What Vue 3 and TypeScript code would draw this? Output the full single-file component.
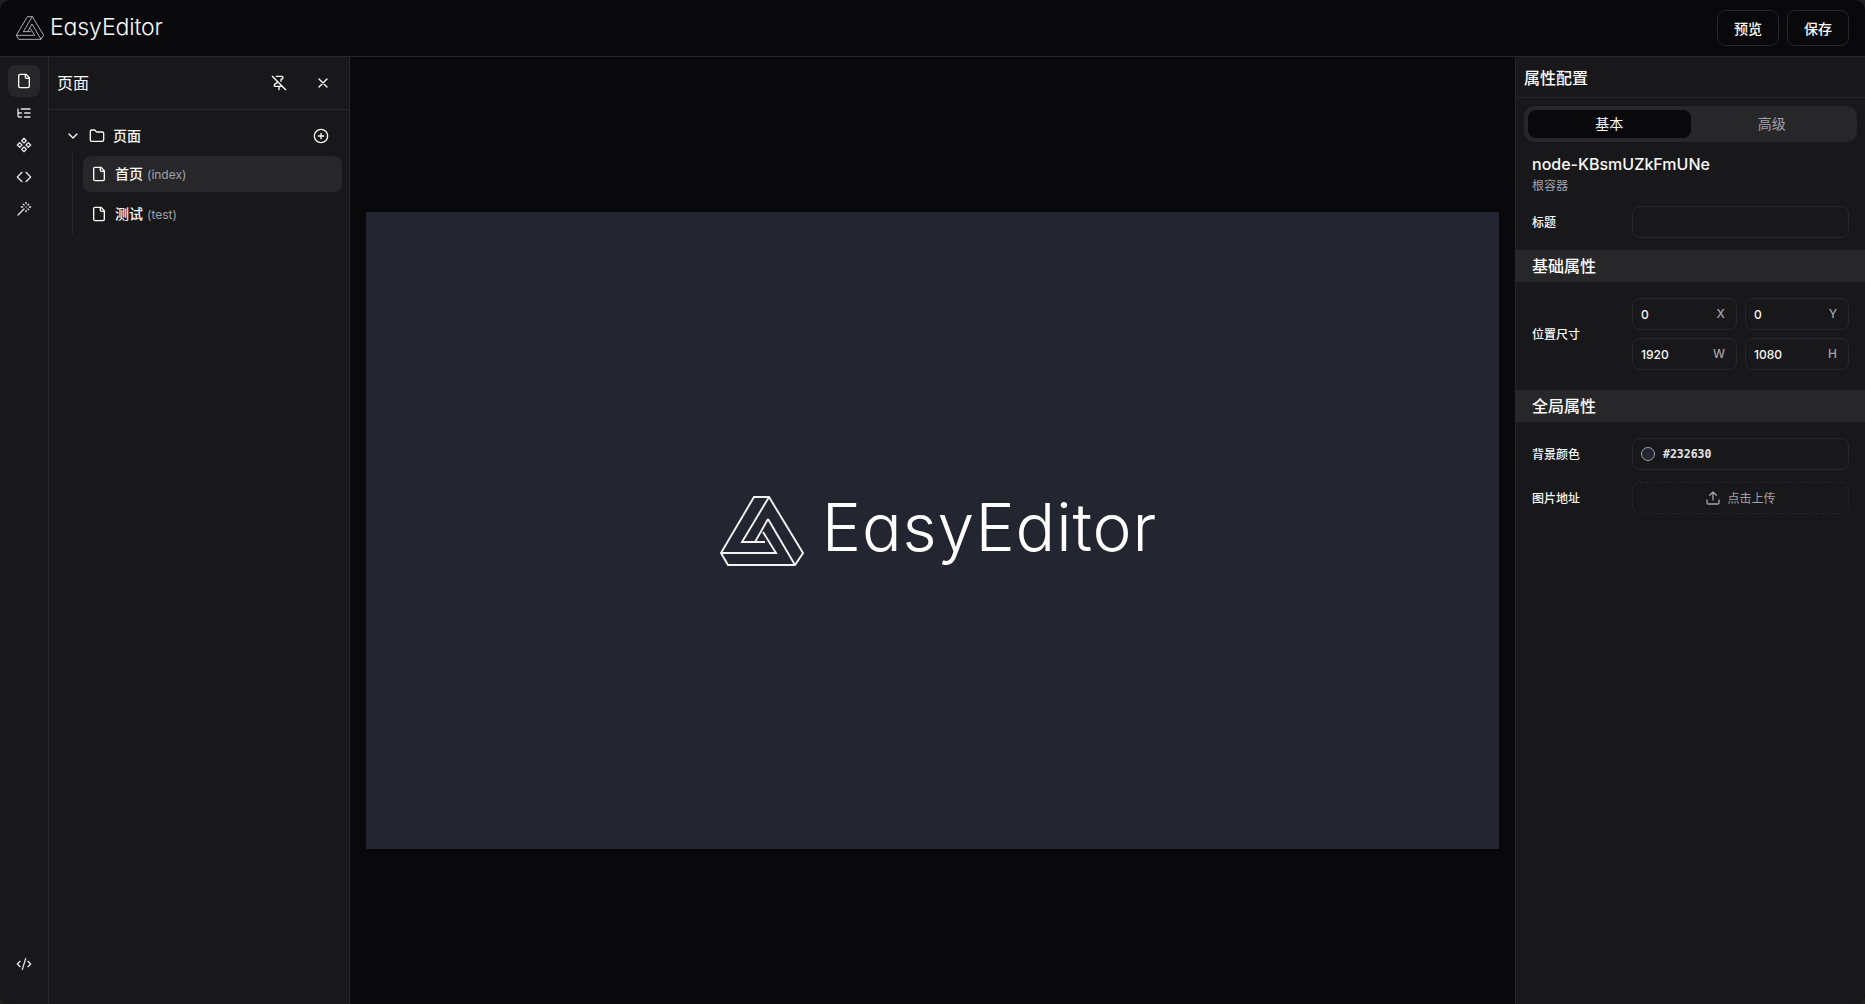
<script setup lang="ts">
const icons: Record<string, string> = {
  file: 'M15 2H6a2 2 0 0 0-2 2v16a2 2 0 0 0 2 2h12a2 2 0 0 0 2-2V7Z M14 2v4a2 2 0 0 0 2 2h4',
  tree: 'M21 12h-8 M21 6H8 M21 18h-8 M3 6v4c0 1.1.9 2 2 2h3 M3 10v6c0 1.1.9 2 2 2h3',
  component: 'M5.5 8.5 9 12l-3.5 3.5L2 12l3.5-3.5Z M12 2l3.5 3.5L12 9 8.5 5.5 12 2Z M18.5 8.5 22 12l-3.5 3.5L15 12l3.5-3.5Z M12 15l3.5 3.5L12 22l-3.5-3.5L12 15Z',
  code: 'M9 5l-7 7 7 7 M15 5l7 7-7 7',
  wand: 'M15 4V2 M15 16v-2 M8 9h2 M20 9h2 M17.8 11.8 19 13 M15 9h.01 M17.8 6.2 19 5 M3 21l9-9 M12.2 6.2 11 5',
  xml: 'M18 16l4-4-4-4 M6 8l-4 4 4 4 M14.5 4l-5 16',
  pinOff: 'M12 17v5 M15 9.34V7a1 1 0 0 1 1-1 2 2 0 0 0 0-4H7.89 M2 2l20 20 M9 9v1.76a2 2 0 0 1-1.11 1.79l-1.78.9A2 2 0 0 0 5 15.24V16a1 1 0 0 0 1 1h11',
  close: 'M18 6 6 18 M6 6l12 12',
  chevron: 'M6 9l6 6 6-6',
  folder: 'M20 20a2 2 0 0 0 2-2V8a2 2 0 0 0-2-2h-7.9a2 2 0 0 1-1.69-.9L9.6 3.9A2 2 0 0 0 7.93 3H4a2 2 0 0 0-2 2v13a2 2 0 0 0 2 2Z',
  plus: 'M2 12a10 10 0 1 0 20 0a10 10 0 1 0-20 0 M8 12h8 M12 8v8',
  upload: 'M21 15v4a2 2 0 0 1-2 2H5a2 2 0 0 1-2-2v-4 M17 8l-5-5-5 5 M12 3v12',
}

const logoPath =
  'M44 12H59L93 68L85 80H18L11 68Z M11 68H66L53 47 M59 12L32 57H55 M58 34L85 80 M58 34L45 57'

const railIcons = ['file', 'tree', 'component', 'code', 'wand']

const pages = [
  { name: '首页', route: '(index)', active: true },
  { name: '测试', route: '(test)', active: false },
]

const geometry = [
  { value: '0', unit: 'X' },
  { value: '0', unit: 'Y' },
  { value: '1920', unit: 'W' },
  { value: '1080', unit: 'H' },
]
</script>

<template>
  <div class="app">
    <header class="topbar">
      <div class="brand">
        <svg class="brand__mark" viewBox="10 11 84 70"><path :d="logoPath" /></svg>
        <span class="brand__name">EasyEditor</span>
      </div>
      <div class="topbar__actions">
        <button class="btn">预览</button>
        <button class="btn">保存</button>
      </div>
    </header>

    <div class="workspace">
      <nav class="rail">
        <button
          v-for="(name, i) in railIcons"
          :key="name"
          class="rail__btn"
          :class="{ 'rail__btn--active': i === 0 }"
        >
          <svg class="icon" viewBox="0 0 24 24"><path :d="icons[name]" /></svg>
        </button>
        <button class="rail__btn rail__btn--bottom">
          <svg class="icon" viewBox="0 0 24 24"><path :d="icons.xml" /></svg>
        </button>
      </nav>

      <aside class="pages">
        <div class="pages__head">
          <span class="pages__title">页面</span>
          <svg class="icon pages__pin" viewBox="0 0 24 24"><path :d="icons.pinOff" /></svg>
          <svg class="icon pages__close" viewBox="0 0 24 24"><path :d="icons.close" /></svg>
        </div>
        <div class="tree">
          <div class="tree__root">
            <svg class="icon tree__chevron" viewBox="0 0 24 24"><path :d="icons.chevron" /></svg>
            <svg class="icon" viewBox="0 0 24 24"><path :d="icons.folder" /></svg>
            <span class="tree__label">页面</span>
            <svg class="icon tree__add" viewBox="0 0 24 24"><path :d="icons.plus" /></svg>
          </div>
          <ul class="tree__list">
            <li
              v-for="page in pages"
              :key="page.route"
              class="tree__item"
              :class="{ 'tree__item--active': page.active }"
            >
              <svg class="icon" viewBox="0 0 24 24"><path :d="icons.file" /></svg>
              <span class="tree__name">{{ page.name }}</span>
              <span class="tree__route">{{ page.route }}</span>
            </li>
          </ul>
        </div>
      </aside>

      <main class="stage">
        <div class="canvas">
          <svg class="canvas__mark" viewBox="10 11 84 70"><path :d="logoPath" /></svg>
          <span class="canvas__name">EasyEditor</span>
        </div>
      </main>

      <aside class="props">
        <div class="props__head">属性配置</div>
        <div class="tabs">
          <div class="tabs__item tabs__item--active">基本</div>
          <div class="tabs__item">高级</div>
        </div>
        <div class="node">
          <div class="node__id">node-KBsmUZkFmUNe</div>
          <div class="node__type">根容器</div>
        </div>
        <div class="row row--title">
          <span class="row__label">标题</span>
          <input class="field" />
        </div>

        <h3 class="band">基础属性</h3>
        <div class="row row--geometry">
          <span class="row__label">位置尺寸</span>
          <div class="geometry">
            <label v-for="g in geometry" :key="g.unit" class="field field--unit">
              <span>{{ g.value }}</span>
              <span class="field__unit">{{ g.unit }}</span>
            </label>
          </div>
        </div>

        <h3 class="band">全局属性</h3>
        <div class="row row--color">
          <span class="row__label">背景颜色</span>
          <div class="field field--color">
            <span class="swatch"></span>
            <span class="field__hex">#232630</span>
          </div>
        </div>
        <div class="row row--upload">
          <span class="row__label">图片地址</span>
          <div class="field field--upload">
            <svg class="icon" viewBox="0 0 24 24"><path :d="icons.upload" /></svg>
            <span class="field__hint">点击上传</span>
          </div>
        </div>
      </aside>
    </div>
  </div>
</template>

<style>
html, body {
  margin: 0;
  background: #1f1f1f;
}
</style>

<style scoped>
.app {
  height: 100vh;
  display: flex;
  flex-direction: column;
  overflow: hidden;
  border-radius: 10px;
  background: #09090b;
  color: #fafafa;
  font-family: Inter, "Noto Sans CJK SC", sans-serif;
  font-size: 14px;
}

.icon {
  width: 16px;
  height: 16px;
  flex: none;
  fill: none;
  stroke: currentColor;
  stroke-width: 2;
  stroke-linecap: round;
  stroke-linejoin: round;
}

.topbar {
  height: 56px;
  flex: none;
  display: flex;
  align-items: center;
  justify-content: space-between;
  padding: 0 16px;
  border-bottom: 1px solid #27272a;
}

.brand {
  display: flex;
  align-items: center;
  gap: 6px;
}

.brand__mark {
  width: 28px;
  height: 24px;
  fill: none;
  stroke: #d4d4d8;
  stroke-width: 2.4;
}

.brand__name {
  margin-top: -3px;
  font-family: Inter, sans-serif;
  font-feature-settings: "cv11";
  font-weight: 300;
  font-size: 23px;
  line-height: 28px;
  letter-spacing: -0.1px;
}

.topbar__actions {
  display: flex;
  gap: 8px;
}

.btn {
  width: 62px;
  height: 36px;
  border: 1px solid #27272a;
  border-radius: 8px;
  background: #09090b;
  color: #fafafa;
  font: 500 14px Inter, "Noto Sans CJK SC", sans-serif;
}

.workspace {
  flex: 1;
  min-height: 0;
  display: flex;
}

.rail {
  width: 48px;
  flex: none;
  box-sizing: content-box;
  display: flex;
  flex-direction: column;
  align-items: center;
  padding: 8px 0 24px;
  background: #18181b;
  border-right: 1px solid #27272a;
}

.rail__btn {
  width: 32px;
  height: 32px;
  flex: none;
  display: flex;
  align-items: center;
  justify-content: center;
  padding: 0;
  border: 0;
  border-radius: 8px;
  background: none;
  color: #e4e4e7;
}

.rail__btn--active {
  background: #27272a;
  color: #fafafa;
}

.rail__btn--bottom {
  margin-top: auto;
}

.pages {
  width: 300px;
  flex: none;
  background: #18181b;
  border-right: 1px solid #27272a;
}

.pages__head {
  height: 52px;
  display: flex;
  align-items: center;
  padding: 0 18px 0 8px;
  border-bottom: 1px solid #27272a;
}

.pages__title {
  flex: 1;
  padding-bottom: 2px;
  font-size: 16px;
}

.pages__pin {
  margin-right: 28px;
}

.tree {
  padding: 9px 0 0 16px;
}

.tree__root {
  height: 34px;
  display: flex;
  align-items: center;
  padding: 0 20px 0 0;
  font-weight: 500;
  font-size: 13px;
}

.tree__chevron {
  margin-right: 8px;
}

.tree__label {
  flex: 1;
  margin-left: 8px;
  padding-bottom: 2px;
  font-size: 14px;
}

.tree__list {
  list-style: none;
  margin: 0 0 0 7px;
  padding: 3px 0 2px 10px;
  border-left: 1px solid #27272a;
  display: flex;
  flex-direction: column;
  gap: 4px;
  box-sizing: border-box;
  width: 270px;
}

.tree__item {
  height: 36px;
  display: flex;
  align-items: center;
  gap: 8px;
  padding: 0 8px;
  border-radius: 8px;
}

.tree__item--active {
  background: #27272a;
}

.tree__name {
  padding-bottom: 2px;
  font-weight: 500;
}

.tree__route {
  margin-left: -4px;
  color: #a1a1aa;
  font-size: 12px;
}

.stage {
  flex: 1;
  min-width: 0;
  display: flex;
  align-items: center;
  justify-content: center;
  padding: 0 16px;
  background: #09090b;
}

.canvas {
  width: 100%;
  aspect-ratio: 16 / 9;
  display: flex;
  align-items: center;
  justify-content: center;
  gap: 18px;
  padding-left: 12px;
  box-sizing: border-box;
  background: #232630;
}

.canvas__mark {
  width: 84px;
  height: 72px;
  margin-top: 1px;
  fill: none;
  stroke: #f4f4f5;
  stroke-width: 1.9;
}

.canvas__name {
  margin-top: -8px;
  font-family: Inter, sans-serif;
  font-feature-settings: "cv11";
  font-weight: 300;
  font-size: 66px;
  line-height: 80px;
  letter-spacing: 0.9px;
  color: #fff;
}

.props {
  width: 349px;
  flex: none;
  background: #18181b;
  border-left: 1px solid #27272a;
}

.props__head {
  height: 40px;
  display: flex;
  align-items: center;
  padding-left: 8px;
  font-size: 16px;
  font-weight: 500;
  border-bottom: 1px solid #27272a;
}

.tabs {
  display: flex;
  margin: 8px 8px 0;
  padding: 4px;
  height: 36px;
  box-sizing: border-box;
  border-radius: 10px;
  background: #27272a;
}

.tabs__item {
  flex: 1;
  display: flex;
  align-items: center;
  justify-content: center;
  padding-bottom: 2px;
  border-radius: 8px;
  color: #a1a1aa;
}

.tabs__item--active {
  background: #09090b;
  color: #fafafa;
}

.node {
  padding: 10px 16px 0;
}

.node__id {
  font-size: 16px;
  line-height: 24px;
  font-weight: 450;
}

.node__type {
  margin-top: 2px;
  font-size: 12px;
  line-height: 16px;
  color: #a1a1aa;
}

.row {
  display: flex;
  align-items: center;
  padding: 0 16px;
}

.row--title {
  margin-top: 12px;
  margin-bottom: 12px;
}

.row--geometry {
  padding-top: 16px;
  padding-bottom: 20px;
}

.row--color {
  padding-top: 16px;
  padding-bottom: 12px;
}

.row__label {
  width: 100px;
  flex: none;
  padding-bottom: 2px;
  font-size: 12px;
  font-weight: 500;
}

.band {
  height: 32px;
  margin: 0;
  display: flex;
  align-items: center;
  padding: 0 0 2px 16px;
  box-sizing: border-box;
  background: #27272a;
  font-size: 16px;
  font-weight: 500;
}

.field {
  width: 217px;
  height: 32px;
  box-sizing: border-box;
  border: 1px solid #27272a;
  border-radius: 8px;
  background: transparent;
  color: #fafafa;
  font-size: 12px;
  outline: none;
}

.geometry {
  width: 217px;
  display: grid;
  grid-template-columns: 105px 104px;
  gap: 8px;
}

.field--unit {
  width: auto;
  display: flex;
  align-items: center;
  justify-content: space-between;
  padding: 0 11px 0 8px;
  font-weight: 500;
}

.field__unit {
  margin-top: -2px;
  color: #a1a1aa;
}

.field--color {
  display: flex;
  align-items: center;
  gap: 8px;
  padding: 0 8px;
}

.swatch {
  width: 12px;
  height: 12px;
  border: 1px solid #a1a1aa;
  border-radius: 50%;
  background: #232630;
}

.field__hex {
  font-family: "DejaVu Sans Mono", monospace;
  font-size: 11.5px;
  font-weight: 700;
  color: #e4e4e7;
}

.field--upload {
  display: flex;
  align-items: center;
  justify-content: center;
  gap: 6px;
  border-style: dashed;
  color: #a1a1aa;
}

.field__hint {
  padding-bottom: 2px;
}
</style>
